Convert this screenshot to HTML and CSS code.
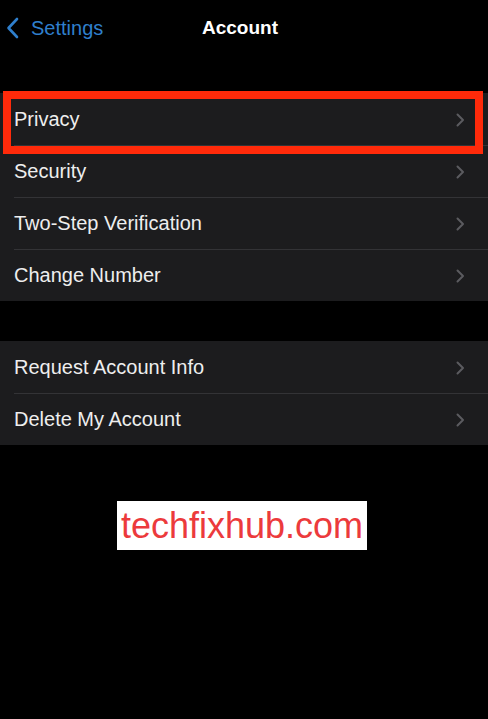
FILE: index.html
```html
<!DOCTYPE html>
<html>
<head>
<meta charset="utf-8">
<link rel="stylesheet" href="styles.css">
</head>
<body>
<div class="screen">
  <header class="nav">
    <div class="back">
      <svg class="back-icon" width="13" height="22" viewBox="0 0 13 22"><path d="M11 2 L2.5 11 L11 20" fill="none" stroke="#2f7fcc" stroke-width="2.6" stroke-linecap="round" stroke-linejoin="round"/></svg>
      <span>Settings</span>
    </div>
    <div class="title">Account</div>
  </header>

  <section class="group group-first">
    <div class="row highlighted">
      <span class="label">Privacy</span>
      <svg class="chev" width="9" height="14" viewBox="0 0 9 14"><path d="M1.5 1.5 L7 7 L1.5 12.5" fill="none" stroke="#5b5b5f" stroke-width="2" stroke-linecap="round" stroke-linejoin="round"/></svg>
      <div class="redbox"></div>
    </div>
    <div class="row">
      <span class="label">Security</span>
      <svg class="chev" width="9" height="14" viewBox="0 0 9 14"><path d="M1.5 1.5 L7 7 L1.5 12.5" fill="none" stroke="#5b5b5f" stroke-width="2" stroke-linecap="round" stroke-linejoin="round"/></svg>
    </div>
    <div class="row">
      <span class="label">Two-Step Verification</span>
      <svg class="chev" width="9" height="14" viewBox="0 0 9 14"><path d="M1.5 1.5 L7 7 L1.5 12.5" fill="none" stroke="#5b5b5f" stroke-width="2" stroke-linecap="round" stroke-linejoin="round"/></svg>
    </div>
    <div class="row">
      <span class="label">Change Number</span>
      <svg class="chev" width="9" height="14" viewBox="0 0 9 14"><path d="M1.5 1.5 L7 7 L1.5 12.5" fill="none" stroke="#5b5b5f" stroke-width="2" stroke-linecap="round" stroke-linejoin="round"/></svg>
    </div>
  </section>

  <section class="group group-second">
    <div class="row">
      <span class="label">Request Account Info</span>
      <svg class="chev" width="9" height="14" viewBox="0 0 9 14"><path d="M1.5 1.5 L7 7 L1.5 12.5" fill="none" stroke="#5b5b5f" stroke-width="2" stroke-linecap="round" stroke-linejoin="round"/></svg>
    </div>
    <div class="row">
      <span class="label">Delete My Account</span>
      <svg class="chev" width="9" height="14" viewBox="0 0 9 14"><path d="M1.5 1.5 L7 7 L1.5 12.5" fill="none" stroke="#5b5b5f" stroke-width="2" stroke-linecap="round" stroke-linejoin="round"/></svg>
    </div>
  </section>

  <div class="watermark-wrap">
    <div class="watermark">techfixhub.com</div>
  </div>
</div>
</body>
</html>
```

FILE: styles.css
```css
html, body {
  margin: 0;
  padding: 0;
  background: #000;
}
.screen {
  width: 488px;
  height: 719px;
  background: #000;
  font-family: "Liberation Sans", Arial, sans-serif;
  overflow: hidden;
}
.nav {
  position: relative;
  height: 56px;
  display: flex;
  align-items: center;
}
.back {
  display: flex;
  align-items: center;
  gap: 12px;
  padding-left: 6px;
  color: #2f7fcc;
  font-size: 20px;
}
.back-icon {
  display: block;
}
.title {
  position: absolute;
  left: 0;
  right: 0;
  top: 0;
  height: 56px;
  line-height: 56px;
  text-align: center;
  color: #fff;
  font-weight: bold;
  font-size: 19px;
  pointer-events: none;
  padding-right: 8px;
}
.group {
  background: #1c1c1e;
}
.group-first {
  margin-top: 37px;
}
.group-second {
  margin-top: 40px;
}
.row {
  position: relative;
  height: 52px;
  display: flex;
  align-items: center;
  justify-content: space-between;
  padding-left: 14px;
  padding-right: 23px;
  padding-top: 1px;
  box-sizing: border-box;
}
.row + .row::before {
  content: "";
  position: absolute;
  left: 14px;
  right: 0;
  top: 0;
  height: 1px;
  background: #333336;
}
.label {
  color: #eeeeee;
  font-size: 20px;
}
.chev {
  display: block;
}
.redbox {
  position: absolute;
  left: 3px;
  right: 5px;
  top: -2px;
  bottom: -9px;
  border: 8px solid #ff2a0a;
  box-sizing: border-box;
  z-index: 2;
}
.watermark-wrap {
  display: flex;
  justify-content: center;
  margin-top: 56px;
  padding-right: 4px;
}
.watermark {
  width: 250px;
  height: 49px;
  background: #fff;
  color: #ec3a3c;
  font-size: 36px;
  line-height: 49px;
  text-align: center;
}
```
